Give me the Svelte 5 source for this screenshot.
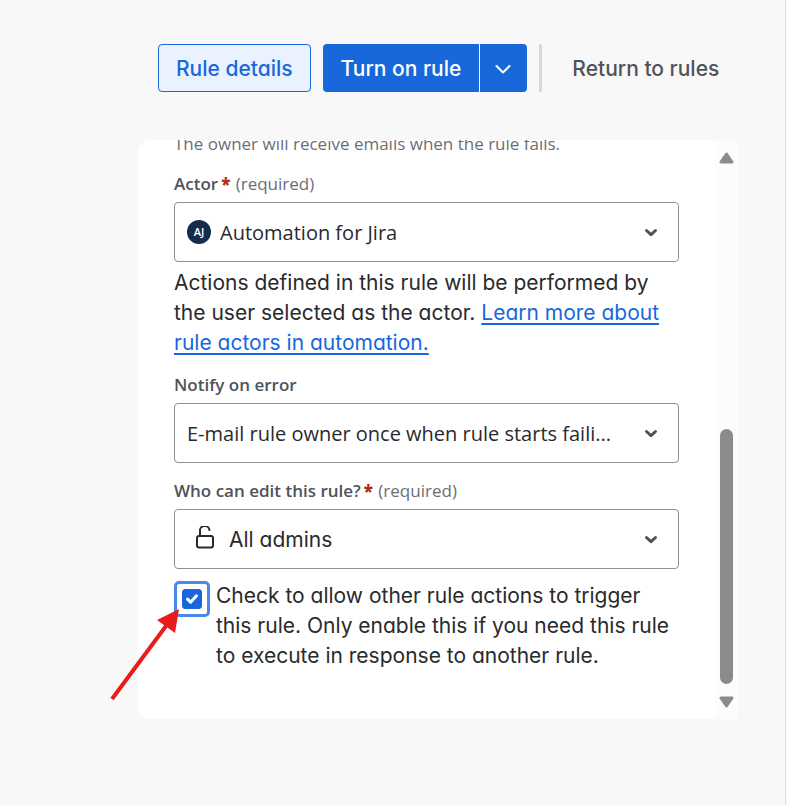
<script lang="ts">
    let actor = "Automation for Jira";
    let notify = "E-mail rule owner once when rule starts faili...";
    let editors = "All admins";
    let allowTrigger = true;
</script>

{#snippet chevron()}
    <svg class="chevron" width="16" height="16" viewBox="0 0 16 16" aria-hidden="true">
        <path d="M3.5 6.500 L8 10.700 L12.500 6.500" />
    </svg>
{/snippet}

<div class="page">
    <header>
        <button class="btn details">Rule details</button>
        <div class="split">
            <button class="btn primary">Turn on rule</button>
            <button class="btn primary more" aria-label="More options">
                <svg width="18" height="18" viewBox="0 0 18 18" aria-hidden="true">
                    <path d="M2.500 7 L9 13.500 L15.500 7" />
                </svg>
            </button>
        </div>
        <div class="divider"></div>
        <a class="return" href="#rules">Return to rules</a>
    </header>

    <div class="wrap">
        <div class="panel">
            <main>
                <p class="hint">The owner will receive emails when the rule fails.</p>

                <label class="label" for="actor">
                    Actor<b>*</b> <span>(required)</span>
                </label>
                <div class="field">
                    <div class="avatar" aria-hidden="true">
                        <svg width="24" height="24" viewBox="0 0 24 24">
                            <circle cx="12" cy="12" r="12" />
                            <text x="12" y="16" text-anchor="middle">AJ</text>
                        </svg>
                    </div>
                    <select id="actor" class="with-avatar" bind:value={actor}>
                        <option>Automation for Jira</option>
                    </select>
                    {@render chevron()}
                </div>
                <p class="text">
                    Actions defined in this rule will be performed by the user selected as the
                    actor. <a href="#learn">Learn more about rule actors in automation.</a>
                </p>

                <label class="label" for="notify">Notify on error</label>
                <div class="field">
                    <select id="notify" bind:value={notify}>
                        <option>E-mail rule owner once when rule starts faili...</option>
                    </select>
                    {@render chevron()}
                </div>

                <label class="label second" for="editors">
                    Who can edit this rule?<b>*</b> <span>(required)</span>
                </label>
                <div class="field">
                    <svg class="lock" width="20" height="26" viewBox="0 0 20 26" aria-hidden="true">
                        <rect x="2" y="10" width="16" height="11.500" rx="2" />
                        <path d="M5 10 V5.500 A4.800 4.800 0 0 1 14.500 4" />
                    </svg>
                    <select id="editors" class="with-lock" bind:value={editors}>
                        <option>All admins</option>
                    </select>
                    {@render chevron()}
                </div>

                <div class="check">
                    <div class="box">
                        <input id="trigger" type="checkbox" bind:checked={allowTrigger} />
                        {#if allowTrigger}
                            <svg width="20" height="20" viewBox="0 0 20 20" aria-hidden="true">
                                <path d="M5.500 10.200 L8.600 13.200 L14.500 6.800" />
                            </svg>
                        {/if}
                    </div>
                    <label class="text" for="trigger">
                        Check to allow other rule actions to trigger this rule. Only enable this if
                        you need this rule to execute in response to another rule.
                    </label>
                </div>
            </main>
            <div class="scrollbar" aria-hidden="true">
                <svg width="15" height="12" viewBox="0 0 15 12">
                    <path d="M7.500 2 L13 10 H2 Z" />
                </svg>
                <div class="track"><div class="thumb"></div></div>
                <svg width="15" height="12" viewBox="0 0 15 12">
                    <path d="M7.500 10 L13 2 H2 Z" />
                </svg>
            </div>
        </div>
        <svg class="arrow" width="76" height="100" viewBox="0 0 76 100" aria-hidden="true">
            <path class="shaft" d="M4 94 L58 21" />
            <path class="head" d="M71 4 L49 15 L67 28 Z" />
        </svg>
    </div>
</div>

<style>
    :global(body) {
        background: #f8f8f8;
    }
    * {
        box-sizing: border-box;
    }
    .page {
        min-height: 100vh;
        margin-right: 1px;
        padding: 44px 47px 86px 138px;
        border-right: 1px solid #dddee1;
        font-family: Inter, "Open Sans", sans-serif;
        font-feature-settings: "cv11";
        font-size: 21px;
        color: #292a2e;
    }
    header {
        display: flex;
        align-items: center;
        padding-left: 20px;
        margin-bottom: 48px;
        white-space: nowrap;
    }
    .btn {
        height: 48px;
        padding: 0 18px;
        border: 0;
        border-radius: 4px;
        font: inherit;
        font-feature-settings: inherit;
        font-weight: 500;
        cursor: pointer;
    }
    .details {
        margin-right: 12px;
        padding: 0 17px;
        border: 1px solid #1868db;
        background: #e9f2fe;
        color: #1868db;
    }
    .split {
        display: flex;
        gap: 1px;
    }
    .primary {
        background: #1868db;
        color: #fff;
    }
    .split .primary:first-child {
        border-radius: 4px 0 0 4px;
    }
    .split .more {
        display: flex;
        align-items: center;
        padding: 0 15px 0 14px;
        border-radius: 0 4px 4px 0;
    }
    .more svg {
        fill: none;
        stroke: #fff;
        stroke-width: 2;
        stroke-linecap: round;
        stroke-linejoin: round;
    }
    .divider {
        width: 3px;
        height: 48px;
        margin: 0 30px 0 12px;
        border-radius: 2px;
        background: #d7d7d7;
    }
    .return {
        color: #505258;
        font-weight: 500;
        text-decoration: none;
    }
    .wrap {
        position: relative;
    }
    .panel {
        display: flex;
        overflow: hidden;
        border-radius: 12px 0 0 12px;
        background: #fff;
    }
    main {
        flex: 1;
        min-width: 0;
        padding: 0 36px 48px;
    }
    .hint {
        margin: -8px 0 16px;
        font-family: "Open Sans", sans-serif;
        font-size: 17px;
        line-height: 24px;
        color: #6b6e76;
    }
    .label {
        display: block;
        margin-bottom: 6px;
        font-family: "Open Sans", sans-serif;
        font-size: 17px;
        font-weight: 600;
        line-height: 24px;
        color: #505258;
    }
    .label.second {
        margin-top: 16px;
    }
    .label b {
        margin: 0 1px 0 3px;
        color: #ae2e24;
    }
    .label span {
        font-weight: 500;
        color: #6b6e76;
    }
    .field {
        display: grid;
        align-items: center;
    }
    .field > * {
        grid-area: 1 / 1;
    }
    select {
        width: 100%;
        height: 60px;
        padding: 0 48px 0 12px;
        border: 1px solid #8c8f97;
        border-radius: 4px;
        appearance: none;
        background: #fff;
        font-family: "Open Sans", sans-serif;
        font-size: 20px;
        color: #292a2e;
        text-overflow: ellipsis;
    }
    .with-avatar {
        padding-left: 45px;
    }
    .with-lock {
        padding-left: 54px;
        font-family: Inter, sans-serif;
        font-size: 21px;
        font-feature-settings: inherit;
    }
    .avatar,
    .lock,
    .chevron {
        z-index: 1;
        pointer-events: none;
    }
    .avatar {
        display: flex;
        margin-left: 13px;
    }
    .avatar circle {
        fill: #172b4d;
    }
    .avatar text {
        fill: #fff;
        font-family: "Open Sans", sans-serif;
        font-size: 11px;
        font-weight: 600;
    }
    .lock {
        margin-left: 21px;
        fill: none;
        stroke: #292a2e;
        stroke-width: 2;
        stroke-linecap: round;
    }
    .chevron {
        justify-self: end;
        margin-right: 20px;
        fill: none;
        stroke: #505258;
        stroke-width: 3;
        stroke-linecap: round;
        stroke-linejoin: round;
    }
    .text {
        margin: 0;
        line-height: 30px;
    }
    p.text {
        margin: 6px 0 15px;
    }
    .text a {
        color: #1868db;
        text-underline-offset: 3px;
        text-decoration-thickness: 2px;
    }
    .check {
        display: flex;
        gap: 6px;
        margin-top: 12px;
    }
    .box {
        display: grid;
        flex: none;
        place-items: center;
        width: 36px;
        height: 36px;
        border: 3px solid #4688ec;
        border-radius: 5px;
    }
    .box > * {
        grid-area: 1 / 1;
    }
    .box input {
        width: 20px;
        height: 20px;
        margin: 0;
        appearance: none;
        border: 1px solid #1868db;
        border-radius: 3px;
        outline: none;
    }
    .box input:checked {
        background: #1868db;
    }
    .box svg {
        z-index: 1;
        pointer-events: none;
        fill: none;
        stroke: #fff;
        stroke-width: 3;
        stroke-linecap: round;
        stroke-linejoin: round;
    }
    .scrollbar {
        display: flex;
        flex-direction: column;
        align-items: center;
        width: 23px;
        padding: 12px 0 11px;
        background: #fcfcfc;
    }
    .scrollbar path {
        fill: #8b8b8b;
        stroke: #8b8b8b;
        stroke-width: 3;
        stroke-linejoin: round;
    }
    .track {
        display: flex;
        flex: 1;
        flex-direction: column;
        justify-content: flex-end;
        padding-bottom: 12px;
    }
    .thumb {
        width: 13px;
        height: 49%;
        border-radius: 7px;
        background: #8b8b8b;
    }
    .arrow {
        position: absolute;
        left: -30px;
        bottom: 14px;
    }
    .shaft {
        stroke: #e81c1c;
        stroke-width: 4;
    }
    .head {
        fill: #e81c1c;
    }
</style>
